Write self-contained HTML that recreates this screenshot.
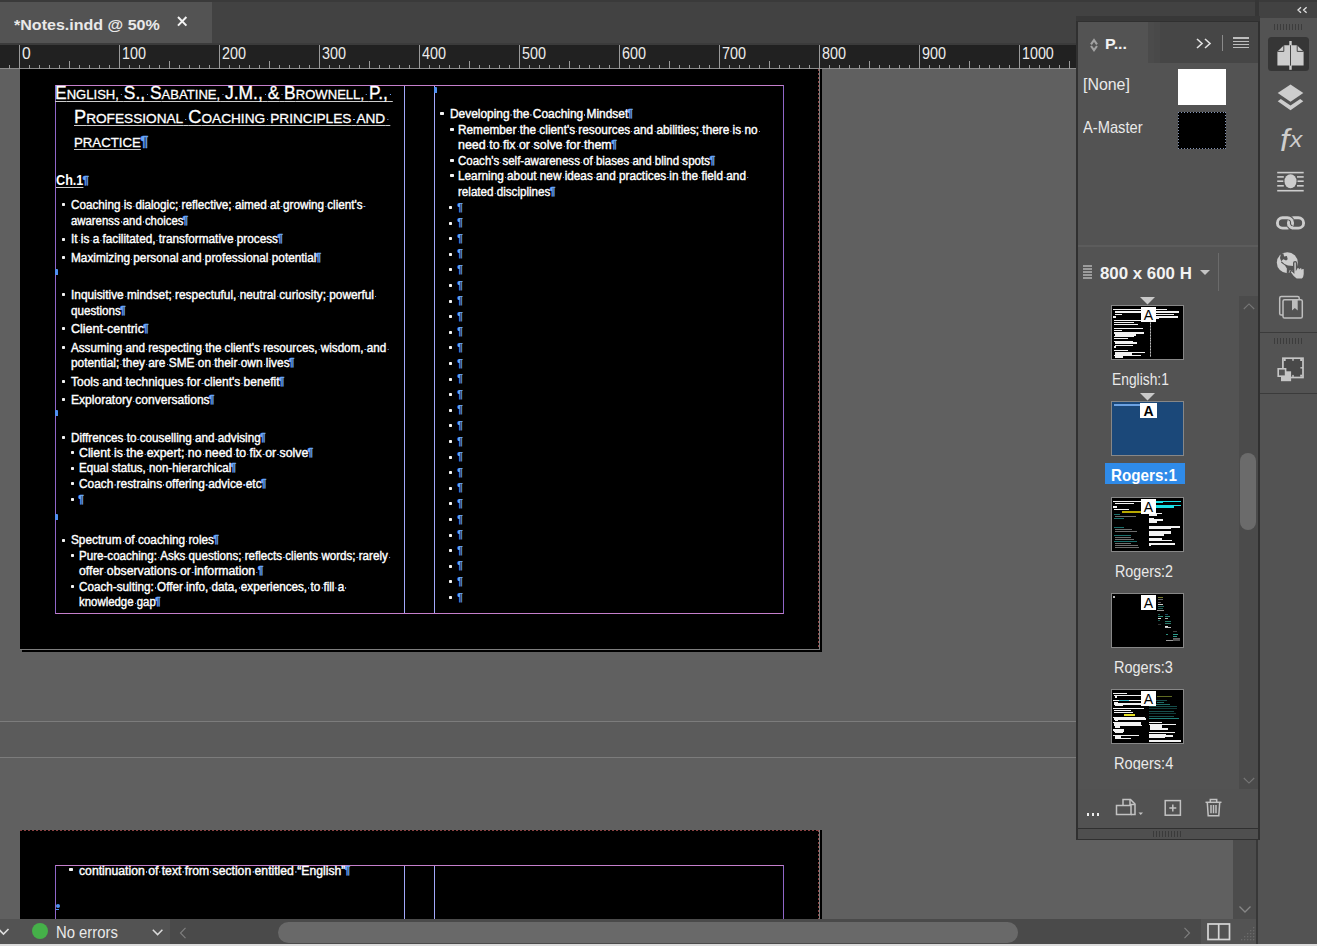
<!DOCTYPE html>
<html lang="en"><head><meta charset="utf-8"><title>Notes.indd</title>
<style>
html,body{margin:0;padding:0}
html{width:1317px;height:946px;overflow:hidden}
body{width:1317px;height:946px;position:relative;overflow:hidden;background:#606060;font-family:"Liberation Sans",sans-serif;color:#e6e6e6}
.ab{position:absolute}
.ln{position:absolute;white-space:pre;transform-origin:0 0;color:#fff}
.bt{-webkit-text-stroke:.4px #fff}
.tt{-webkit-text-stroke:.3px #fff}
.ui{color:#e9e9e9}
.p{color:#66a4f7;font-weight:bold;-webkit-text-stroke:.35px #6aa7f8;font-size:10px;position:relative;top:-1px;display:inline-block;margin-left:-.8px;text-decoration:none}
.pw{margin-left:0;-webkit-text-stroke:.2px #6aa7f8}
.d{font-style:normal;position:relative}
.d::after{content:"";position:absolute;left:50%;margin-left:-.5px;top:56%;width:1.2px;height:1.2px;background:#74acff}
.u>span{text-decoration:underline;text-decoration-thickness:1.3px;text-underline-offset:1.6px;text-decoration-color:#cdcdcd}
.sc{font-size:13.5px}
.bl{position:absolute;width:3.3px;height:3px;background:#f4f4f4;border-radius:.7px}
.mk{position:absolute;width:3px;height:6px;background:#4f90f2;border-radius:1px 1px 0 1px}
svg{position:absolute;overflow:visible}
</style></head>
<body>
<!-- canvas / pasteboard -->
<div class="ab" style="left:20px;top:48px;width:799px;height:601px;background:#000;border-right:1px solid #7e7e7e;border-bottom:1px solid #7e7e7e;box-shadow:2px 2px 0 0 #000"></div>
<div class="ab" style="left:818px;top:69px;width:1px;height:580px;background:repeating-linear-gradient(to bottom,#8e4444 0,#8e4444 2px,transparent 2px,transparent 4px)"></div>
<div class="ab" style="left:55px;top:85px;width:729px;height:529px;box-sizing:border-box;border:1px solid #c57fcb;border-left-color:#8f66c8;border-right-color:#8f66c8"></div>
<div class="ab" style="left:404px;top:86px;width:1px;height:527px;background:#a2a8fb"></div>
<div class="ab" style="left:434px;top:86px;width:1px;height:527px;background:#a2a8fb"></div>
<div class="ln tt u" style="left:54.80px;top:83.90px;font-size:18px;line-height:18px;transform:scaleX(0.9681);"><span>E<span class="sc">NGLISH,</span><i class="d"> </i>S.,<i class="d"> </i>S<span class="sc">ABATINE,</span><i class="d"> </i>J.M.,<i class="d"> </i>&amp;<i class="d"> </i>B<span class="sc">ROWNELL,</span><i class="d"> </i>P.,<i class="d"> </i></span></div>
<div class="ln tt u" style="left:74.20px;top:108.40px;font-size:18px;line-height:18px;transform:scaleX(1.0108);"><span>P<span class="sc">ROFESSIONAL</span><i class="d"> </i>C<span class="sc">OACHING</span><i class="d"> </i><span class="sc">PRINCIPLES</span><i class="d"> </i><span class="sc">AND</span><i class="d"> </i></span></div>
<div class="ln tt u" style="left:74.20px;top:132.30px;font-size:18px;line-height:18px;transform:scaleX(0.9785);"><span><span class="sc">PRACTICE</span></span></div>
<div class="ln" style="left:141.00px;top:132.30px;font-size:18px;line-height:18px"><b class="p" style="font-size:14.5px">¶</b></div>
<div class="ln u" style="left:55.90px;top:173.40px;font-size:14px;line-height:14px;font-weight:bold;transform:scaleX(0.9030);"><span>Ch.1</span></div>
<div class="ln" style="left:83.30px;top:173.40px;font-size:14px;line-height:14px"><b class="p" style="font-size:11.5px">¶</b></div>
<div class="bl" style="left:61.8px;top:202.9px"></div>
<div class="ln bt" style="left:71.00px;top:198.75px;font-size:12px;line-height:12px;transform:scaleX(0.9747);"><span>Coaching<i class="d"> </i>is<i class="d"> </i>dialogic;<i class="d"> </i>reflective;<i class="d"> </i>aimed<i class="d"> </i>at<i class="d"> </i>growing<i class="d"> </i>client's<i class="d"> </i></span></div>
<div class="ln bt" style="left:71.00px;top:214.60px;font-size:12px;line-height:12px;transform:scaleX(0.9464);"><span>awarenss<i class="d"> </i>and<i class="d"> </i>choices</span></div>
<div class="ln" style="left:183.40px;top:214.60px;font-size:12px;line-height:12px"><b class="p">¶</b></div>
<div class="bl" style="left:61.8px;top:237.6px"></div>
<div class="ln bt" style="left:71.00px;top:233.40px;font-size:12px;line-height:12px;transform:scaleX(0.9818);"><span>It<i class="d"> </i>is<i class="d"> </i>a<i class="d"> </i>facilitated,<i class="d"> </i>transformative<i class="d"> </i>process</span></div>
<div class="ln" style="left:278.00px;top:233.40px;font-size:12px;line-height:12px"><b class="p">¶</b></div>
<div class="bl" style="left:61.8px;top:256.3px"></div>
<div class="ln bt" style="left:71.00px;top:252.10px;font-size:12px;line-height:12px;transform:scaleX(0.9834);"><span>Maximizing<i class="d"> </i>personal<i class="d"> </i>and<i class="d"> </i>professional<i class="d"> </i>potential</span></div>
<div class="ln" style="left:316.40px;top:252.10px;font-size:12px;line-height:12px"><b class="p">¶</b></div>
<div class="bl" style="left:61.8px;top:293.2px"></div>
<div class="ln bt" style="left:71.00px;top:289.00px;font-size:12px;line-height:12px;transform:scaleX(0.9873);"><span>Inquisitive<i class="d"> </i>mindset;<i class="d"> </i>respectuful,<i class="d"> </i>neutral<i class="d"> </i>curiosity;<i class="d"> </i>powerful<i class="d"> </i></span></div>
<div class="ln bt" style="left:71.00px;top:305.00px;font-size:12px;line-height:12px;transform:scaleX(0.9693);"><span>questions</span></div>
<div class="ln" style="left:120.80px;top:305.00px;font-size:12px;line-height:12px"><b class="p">¶</b></div>
<div class="bl" style="left:61.8px;top:327.2px"></div>
<div class="ln bt" style="left:71.00px;top:323.00px;font-size:12px;line-height:12px;transform:scaleX(1.0410);"><span>Client-centric</span></div>
<div class="ln" style="left:143.90px;top:323.00px;font-size:12px;line-height:12px"><b class="p">¶</b></div>
<div class="bl" style="left:61.8px;top:345.9px"></div>
<div class="ln bt" style="left:71.00px;top:341.70px;font-size:12px;line-height:12px;transform:scaleX(0.9713);"><span>Assuming<i class="d"> </i>and<i class="d"> </i>respecting<i class="d"> </i>the<i class="d"> </i>client's<i class="d"> </i>resources,<i class="d"> </i>wisdom,<i class="d"> </i>and<i class="d"> </i></span></div>
<div class="ln bt" style="left:71.00px;top:357.00px;font-size:12px;line-height:12px;transform:scaleX(0.9896);"><span>potential;<i class="d"> </i>they<i class="d"> </i>are<i class="d"> </i>SME<i class="d"> </i>on<i class="d"> </i>their<i class="d"> </i>own<i class="d"> </i>lives</span></div>
<div class="ln" style="left:289.60px;top:357.00px;font-size:12px;line-height:12px"><b class="p">¶</b></div>
<div class="bl" style="left:61.8px;top:380.0px"></div>
<div class="ln bt" style="left:71.00px;top:375.80px;font-size:12px;line-height:12px;transform:scaleX(0.9968);"><span>Tools<i class="d"> </i>and<i class="d"> </i>techniques<i class="d"> </i>for<i class="d"> </i>client's<i class="d"> </i>benefit</span></div>
<div class="ln" style="left:279.50px;top:375.80px;font-size:12px;line-height:12px"><b class="p">¶</b></div>
<div class="bl" style="left:61.8px;top:397.9px"></div>
<div class="ln bt" style="left:71.00px;top:393.70px;font-size:12px;line-height:12px;transform:scaleX(1.0037);"><span>Exploratory<i class="d"> </i>conversations</span></div>
<div class="ln" style="left:209.60px;top:393.70px;font-size:12px;line-height:12px"><b class="p">¶</b></div>
<div class="bl" style="left:61.8px;top:436.0px"></div>
<div class="ln bt" style="left:71.00px;top:431.80px;font-size:12px;line-height:12px;transform:scaleX(0.9746);"><span>Diffrences<i class="d"> </i>to<i class="d"> </i>couselling<i class="d"> </i>and<i class="d"> </i>advising</span></div>
<div class="ln" style="left:260.70px;top:431.80px;font-size:12px;line-height:12px"><b class="p">¶</b></div>
<div class="bl" style="left:71.0px;top:450.9px"></div>
<div class="ln bt" style="left:79.00px;top:446.70px;font-size:12px;line-height:12px;transform:scaleX(1.0255);"><span>Client<i class="d"> </i>is<i class="d"> </i>the<i class="d"> </i>expert;<i class="d"> </i>no<i class="d"> </i>need<i class="d"> </i>to<i class="d"> </i>fix<i class="d"> </i>or<i class="d"> </i>solve</span></div>
<div class="ln" style="left:308.30px;top:446.70px;font-size:12px;line-height:12px"><b class="p">¶</b></div>
<div class="bl" style="left:71.0px;top:466.5px"></div>
<div class="ln bt" style="left:79.00px;top:462.30px;font-size:12px;line-height:12px;transform:scaleX(0.9631);"><span>Equal<i class="d"> </i>status,<i class="d"> </i>non-hierarchical</span></div>
<div class="ln" style="left:231.30px;top:462.30px;font-size:12px;line-height:12px"><b class="p">¶</b></div>
<div class="bl" style="left:71.0px;top:481.8px"></div>
<div class="ln bt" style="left:79.00px;top:477.60px;font-size:12px;line-height:12px;transform:scaleX(0.9892);"><span>Coach<i class="d"> </i>restrains<i class="d"> </i>offering<i class="d"> </i>advice<i class="d"> </i>etc</span></div>
<div class="ln" style="left:261.60px;top:477.60px;font-size:12px;line-height:12px"><b class="p">¶</b></div>
<div class="bl" style="left:71.0px;top:497.7px"></div>
<div class="ln" style="left:79.0px;top:493.5px;font-size:12px;line-height:12px"><b class="p">¶</b></div>
<div class="bl" style="left:61.8px;top:538.6px"></div>
<div class="ln bt" style="left:71.00px;top:534.40px;font-size:12px;line-height:12px;transform:scaleX(0.9830);"><span>Spectrum<i class="d"> </i>of<i class="d"> </i>coaching<i class="d"> </i>roles</span></div>
<div class="ln" style="left:214.00px;top:534.40px;font-size:12px;line-height:12px"><b class="p">¶</b></div>
<div class="bl" style="left:71.0px;top:553.9px"></div>
<div class="ln bt" style="left:79.00px;top:549.70px;font-size:12px;line-height:12px;transform:scaleX(0.9662);"><span>Pure-coaching:<i class="d"> </i>Asks<i class="d"> </i>questions;<i class="d"> </i>reflects<i class="d"> </i>clients<i class="d"> </i>words;<i class="d"> </i>rarely<i class="d"> </i></span></div>
<div class="ln bt" style="left:79.00px;top:565.20px;font-size:12px;line-height:12px;transform:scaleX(1.0247);"><span>offer<i class="d"> </i>observations<i class="d"> </i>or<i class="d"> </i>information<i class="d"> </i></span></div>
<div class="ln" style="left:258.60px;top:565.20px;font-size:12px;line-height:12px"><b class="p">¶</b></div>
<div class="bl" style="left:71.0px;top:584.7px"></div>
<div class="ln bt" style="left:79.00px;top:580.50px;font-size:12px;line-height:12px;transform:scaleX(0.9749);"><span>Coach-sulting:<i class="d"> </i>Offer<i class="d"> </i>info,<i class="d"> </i>data,<i class="d"> </i>experiences,<i class="d"> </i>to<i class="d"> </i>fill<i class="d"> </i>a<i class="d"> </i></span></div>
<div class="ln bt" style="left:79.00px;top:596.40px;font-size:12px;line-height:12px;transform:scaleX(0.9511);"><span>knowledge<i class="d"> </i>gap</span></div>
<div class="ln" style="left:155.80px;top:596.40px;font-size:12px;line-height:12px"><b class="p">¶</b></div>
<div class="mk" style="left:55.0px;top:268.6px"></div>
<div class="mk" style="left:55.0px;top:410.2px"></div>
<div class="mk" style="left:55.0px;top:513.5px"></div>
<div class="mk" style="left:434.0px;top:86.5px"></div>
<div class="bl" style="left:440.4px;top:111.8px"></div>
<div class="ln bt" style="left:449.80px;top:107.60px;font-size:12px;line-height:12px;transform:scaleX(0.9928);"><span>Developing<i class="d"> </i>the<i class="d"> </i>Coaching<i class="d"> </i>Mindset</span></div>
<div class="ln" style="left:628.00px;top:107.60px;font-size:12px;line-height:12px"><b class="p">¶</b></div>
<div class="bl" style="left:450.3px;top:128.2px"></div>
<div class="ln bt" style="left:458.30px;top:124.00px;font-size:12px;line-height:12px;transform:scaleX(0.9834);"><span>Remember<i class="d"> </i>the<i class="d"> </i>client's<i class="d"> </i>resources<i class="d"> </i>and<i class="d"> </i>abilities;<i class="d"> </i>there<i class="d"> </i>is<i class="d"> </i>no<i class="d"> </i></span></div>
<div class="ln bt" style="left:458.30px;top:139.30px;font-size:12px;line-height:12px;transform:scaleX(1.0373);"><span>need<i class="d"> </i>to<i class="d"> </i>fix<i class="d"> </i>or<i class="d"> </i>solve<i class="d"> </i>for<i class="d"> </i>them</span></div>
<div class="ln" style="left:612.00px;top:139.30px;font-size:12px;line-height:12px"><b class="p">¶</b></div>
<div class="bl" style="left:450.3px;top:159.4px"></div>
<div class="ln bt" style="left:458.30px;top:155.20px;font-size:12px;line-height:12px;transform:scaleX(0.9595);"><span>Coach's<i class="d"> </i>self-awareness<i class="d"> </i>of<i class="d"> </i>biases<i class="d"> </i>and<i class="d"> </i>blind<i class="d"> </i>spots</span></div>
<div class="ln" style="left:710.20px;top:155.20px;font-size:12px;line-height:12px"><b class="p">¶</b></div>
<div class="bl" style="left:450.3px;top:174.3px"></div>
<div class="ln bt" style="left:458.30px;top:170.10px;font-size:12px;line-height:12px;transform:scaleX(0.9804);"><span>Learning<i class="d"> </i>about<i class="d"> </i>new<i class="d"> </i>ideas<i class="d"> </i>and<i class="d"> </i>practices<i class="d"> </i>in<i class="d"> </i>the<i class="d"> </i>field<i class="d"> </i>and<i class="d"> </i></span></div>
<div class="ln bt" style="left:458.30px;top:186.00px;font-size:12px;line-height:12px;transform:scaleX(0.9674);"><span>related<i class="d"> </i>disciplines</span></div>
<div class="ln" style="left:550.60px;top:186.00px;font-size:12px;line-height:12px"><b class="p">¶</b></div>
<div class="bl" style="left:449.0px;top:205.9px"></div>
<div class="ln" style="left:457.3px;top:201.60px;font-size:12px;line-height:12px"><b class="p pw">¶</b></div>
<div class="bl" style="left:449.0px;top:221.5px"></div>
<div class="ln" style="left:457.3px;top:217.20px;font-size:12px;line-height:12px"><b class="p pw">¶</b></div>
<div class="bl" style="left:449.0px;top:237.1px"></div>
<div class="ln" style="left:457.3px;top:232.80px;font-size:12px;line-height:12px"><b class="p pw">¶</b></div>
<div class="bl" style="left:449.0px;top:252.7px"></div>
<div class="ln" style="left:457.3px;top:248.40px;font-size:12px;line-height:12px"><b class="p pw">¶</b></div>
<div class="bl" style="left:449.0px;top:268.3px"></div>
<div class="ln" style="left:457.3px;top:264.00px;font-size:12px;line-height:12px"><b class="p pw">¶</b></div>
<div class="bl" style="left:449.0px;top:283.9px"></div>
<div class="ln" style="left:457.3px;top:279.60px;font-size:12px;line-height:12px"><b class="p pw">¶</b></div>
<div class="bl" style="left:449.0px;top:299.5px"></div>
<div class="ln" style="left:457.3px;top:295.20px;font-size:12px;line-height:12px"><b class="p pw">¶</b></div>
<div class="bl" style="left:449.0px;top:315.1px"></div>
<div class="ln" style="left:457.3px;top:310.80px;font-size:12px;line-height:12px"><b class="p pw">¶</b></div>
<div class="bl" style="left:449.0px;top:330.7px"></div>
<div class="ln" style="left:457.3px;top:326.40px;font-size:12px;line-height:12px"><b class="p pw">¶</b></div>
<div class="bl" style="left:449.0px;top:346.3px"></div>
<div class="ln" style="left:457.3px;top:342.00px;font-size:12px;line-height:12px"><b class="p pw">¶</b></div>
<div class="bl" style="left:449.0px;top:361.9px"></div>
<div class="ln" style="left:457.3px;top:357.60px;font-size:12px;line-height:12px"><b class="p pw">¶</b></div>
<div class="bl" style="left:449.0px;top:377.5px"></div>
<div class="ln" style="left:457.3px;top:373.20px;font-size:12px;line-height:12px"><b class="p pw">¶</b></div>
<div class="bl" style="left:449.0px;top:393.1px"></div>
<div class="ln" style="left:457.3px;top:388.80px;font-size:12px;line-height:12px"><b class="p pw">¶</b></div>
<div class="bl" style="left:449.0px;top:408.7px"></div>
<div class="ln" style="left:457.3px;top:404.40px;font-size:12px;line-height:12px"><b class="p pw">¶</b></div>
<div class="bl" style="left:449.0px;top:424.3px"></div>
<div class="ln" style="left:457.3px;top:420.00px;font-size:12px;line-height:12px"><b class="p pw">¶</b></div>
<div class="bl" style="left:449.0px;top:439.9px"></div>
<div class="ln" style="left:457.3px;top:435.60px;font-size:12px;line-height:12px"><b class="p pw">¶</b></div>
<div class="bl" style="left:449.0px;top:455.5px"></div>
<div class="ln" style="left:457.3px;top:451.20px;font-size:12px;line-height:12px"><b class="p pw">¶</b></div>
<div class="bl" style="left:449.0px;top:471.1px"></div>
<div class="ln" style="left:457.3px;top:466.80px;font-size:12px;line-height:12px"><b class="p pw">¶</b></div>
<div class="bl" style="left:449.0px;top:486.7px"></div>
<div class="ln" style="left:457.3px;top:482.40px;font-size:12px;line-height:12px"><b class="p pw">¶</b></div>
<div class="bl" style="left:449.0px;top:502.3px"></div>
<div class="ln" style="left:457.3px;top:498.00px;font-size:12px;line-height:12px"><b class="p pw">¶</b></div>
<div class="bl" style="left:449.0px;top:517.9px"></div>
<div class="ln" style="left:457.3px;top:513.60px;font-size:12px;line-height:12px"><b class="p pw">¶</b></div>
<div class="bl" style="left:449.0px;top:533.5px"></div>
<div class="ln" style="left:457.3px;top:529.20px;font-size:12px;line-height:12px"><b class="p pw">¶</b></div>
<div class="bl" style="left:449.0px;top:549.1px"></div>
<div class="ln" style="left:457.3px;top:544.80px;font-size:12px;line-height:12px"><b class="p pw">¶</b></div>
<div class="bl" style="left:449.0px;top:564.7px"></div>
<div class="ln" style="left:457.3px;top:560.40px;font-size:12px;line-height:12px"><b class="p pw">¶</b></div>
<div class="bl" style="left:449.0px;top:580.3px"></div>
<div class="ln" style="left:457.3px;top:576.00px;font-size:12px;line-height:12px"><b class="p pw">¶</b></div>
<div class="bl" style="left:449.0px;top:595.9px"></div>
<div class="ln" style="left:457.3px;top:591.60px;font-size:12px;line-height:12px"><b class="p pw">¶</b></div>
<div class="ab" style="left:0;top:721px;width:1317px;height:37px;background:#5b5b5b;border-top:1px solid #7c7c7c;border-bottom:1px solid #7c7c7c;box-sizing:border-box"></div>
<div class="ab" style="left:20px;top:830px;width:799px;height:120px;background:#000;border-right:1px solid #7e7e7e;box-shadow:2px 0 0 0 #000"></div>
<div class="ab" style="left:20px;top:830px;width:800px;height:1px;background:repeating-linear-gradient(to right,#8a4040 0,#8a4040 2px,transparent 2px,transparent 4px)"></div>
<div class="ab" style="left:818px;top:830px;width:1px;height:100px;background:repeating-linear-gradient(to bottom,#8e4444 0,#8e4444 2px,transparent 2px,transparent 4px)"></div>
<div class="ab" style="left:55px;top:865px;width:729px;height:100px;box-sizing:border-box;border:1px solid #c57fcb;border-left-color:#8f66c8;border-right-color:#8f66c8"></div>
<div class="ab" style="left:404px;top:866px;width:1px;height:80px;background:#a2a8fb"></div>
<div class="ab" style="left:434px;top:866px;width:1px;height:80px;background:#a2a8fb"></div>
<div class="bl" style="left:69.3px;top:868.3px"></div>
<div class="ln bt" style="left:79.00px;top:864.50px;font-size:12px;line-height:12px;transform:scaleX(1.0159);"><span>continuation<i class="d"> </i>of<i class="d"> </i>text<i class="d"> </i>from<i class="d"> </i>section<i class="d"> </i>entitled<i class="d"> </i>“English”</span></div>
<div class="ln" style="left:345.40px;top:864.50px;font-size:12px;line-height:12px"><b class="p">¶</b></div>
<div class="ab" style="left:55.5px;top:903.5px;width:4px;height:4px;border-radius:2px;background:#4f90f2"></div>
<div class="ab" style="left:56px;top:908.5px;width:3px;height:1px;background:#4f90f2"></div>
<!-- document tab bar -->
<div class="ab" style="left:0;top:0;width:1317px;height:44px;background:#424242"></div>
<div class="ab" style="left:0;top:0;width:1317px;height:2px;background:#3a3a3a"></div>
<div class="ab" style="left:0;top:2px;width:212px;height:41.5px;background:#535353"></div>
<div class="ln ui" style="left:13.70px;top:17.20px;font-size:15px;line-height:15px;font-weight:bold;transform:scaleX(1.0695);"><span>*Notes.indd @ 50%</span></div>
<svg style="left:177.3px;top:16.2px" width="11" height="11" viewBox="0 0 11 11"><path d="M1 1 L9.4 9.6 M9.4 1 L1 9.6" stroke="#f4f4f4" stroke-width="2" fill="none"/></svg>
<!-- ruler -->
<div class="ab" style="left:0;top:43px;width:1078px;height:2px;background:#3b3b3b"></div>
<div class="ab" style="left:0;top:45px;width:1078px;height:24px;background:#212121"></div>
<svg style="left:0;top:45px" width="1078" height="24" viewBox="0 0 1078 24" shape-rendering="crispEdges"><rect x="0" y="23" width="1078" height="1" fill="#8c8c8c"/><rect x="9" y="20" width="1" height="4" fill="#9a9a9a"/><rect x="19" y="0" width="1" height="24" fill="#9a9a9a"/><rect x="29" y="20" width="1" height="4" fill="#9a9a9a"/><rect x="39" y="20" width="1" height="4" fill="#9a9a9a"/><rect x="49" y="20" width="1" height="4" fill="#9a9a9a"/><rect x="59" y="20" width="1" height="4" fill="#9a9a9a"/><rect x="69" y="16" width="1" height="8" fill="#9a9a9a"/><rect x="79" y="20" width="1" height="4" fill="#9a9a9a"/><rect x="89" y="20" width="1" height="4" fill="#9a9a9a"/><rect x="99" y="20" width="1" height="4" fill="#9a9a9a"/><rect x="109" y="20" width="1" height="4" fill="#9a9a9a"/><rect x="119" y="0" width="1" height="24" fill="#9a9a9a"/><rect x="129" y="20" width="1" height="4" fill="#9a9a9a"/><rect x="139" y="20" width="1" height="4" fill="#9a9a9a"/><rect x="149" y="20" width="1" height="4" fill="#9a9a9a"/><rect x="159" y="20" width="1" height="4" fill="#9a9a9a"/><rect x="169" y="16" width="1" height="8" fill="#9a9a9a"/><rect x="179" y="20" width="1" height="4" fill="#9a9a9a"/><rect x="189" y="20" width="1" height="4" fill="#9a9a9a"/><rect x="199" y="20" width="1" height="4" fill="#9a9a9a"/><rect x="209" y="20" width="1" height="4" fill="#9a9a9a"/><rect x="219" y="0" width="1" height="24" fill="#9a9a9a"/><rect x="229" y="20" width="1" height="4" fill="#9a9a9a"/><rect x="239" y="20" width="1" height="4" fill="#9a9a9a"/><rect x="249" y="20" width="1" height="4" fill="#9a9a9a"/><rect x="259" y="20" width="1" height="4" fill="#9a9a9a"/><rect x="269" y="16" width="1" height="8" fill="#9a9a9a"/><rect x="279" y="20" width="1" height="4" fill="#9a9a9a"/><rect x="289" y="20" width="1" height="4" fill="#9a9a9a"/><rect x="299" y="20" width="1" height="4" fill="#9a9a9a"/><rect x="309" y="20" width="1" height="4" fill="#9a9a9a"/><rect x="319" y="0" width="1" height="24" fill="#9a9a9a"/><rect x="329" y="20" width="1" height="4" fill="#9a9a9a"/><rect x="339" y="20" width="1" height="4" fill="#9a9a9a"/><rect x="349" y="20" width="1" height="4" fill="#9a9a9a"/><rect x="359" y="20" width="1" height="4" fill="#9a9a9a"/><rect x="369" y="16" width="1" height="8" fill="#9a9a9a"/><rect x="379" y="20" width="1" height="4" fill="#9a9a9a"/><rect x="389" y="20" width="1" height="4" fill="#9a9a9a"/><rect x="399" y="20" width="1" height="4" fill="#9a9a9a"/><rect x="409" y="20" width="1" height="4" fill="#9a9a9a"/><rect x="419" y="0" width="1" height="24" fill="#9a9a9a"/><rect x="429" y="20" width="1" height="4" fill="#9a9a9a"/><rect x="439" y="20" width="1" height="4" fill="#9a9a9a"/><rect x="449" y="20" width="1" height="4" fill="#9a9a9a"/><rect x="459" y="20" width="1" height="4" fill="#9a9a9a"/><rect x="469" y="16" width="1" height="8" fill="#9a9a9a"/><rect x="479" y="20" width="1" height="4" fill="#9a9a9a"/><rect x="489" y="20" width="1" height="4" fill="#9a9a9a"/><rect x="499" y="20" width="1" height="4" fill="#9a9a9a"/><rect x="509" y="20" width="1" height="4" fill="#9a9a9a"/><rect x="519" y="0" width="1" height="24" fill="#9a9a9a"/><rect x="529" y="20" width="1" height="4" fill="#9a9a9a"/><rect x="539" y="20" width="1" height="4" fill="#9a9a9a"/><rect x="549" y="20" width="1" height="4" fill="#9a9a9a"/><rect x="559" y="20" width="1" height="4" fill="#9a9a9a"/><rect x="569" y="16" width="1" height="8" fill="#9a9a9a"/><rect x="579" y="20" width="1" height="4" fill="#9a9a9a"/><rect x="589" y="20" width="1" height="4" fill="#9a9a9a"/><rect x="599" y="20" width="1" height="4" fill="#9a9a9a"/><rect x="609" y="20" width="1" height="4" fill="#9a9a9a"/><rect x="619" y="0" width="1" height="24" fill="#9a9a9a"/><rect x="629" y="20" width="1" height="4" fill="#9a9a9a"/><rect x="639" y="20" width="1" height="4" fill="#9a9a9a"/><rect x="649" y="20" width="1" height="4" fill="#9a9a9a"/><rect x="659" y="20" width="1" height="4" fill="#9a9a9a"/><rect x="669" y="16" width="1" height="8" fill="#9a9a9a"/><rect x="679" y="20" width="1" height="4" fill="#9a9a9a"/><rect x="689" y="20" width="1" height="4" fill="#9a9a9a"/><rect x="699" y="20" width="1" height="4" fill="#9a9a9a"/><rect x="709" y="20" width="1" height="4" fill="#9a9a9a"/><rect x="719" y="0" width="1" height="24" fill="#9a9a9a"/><rect x="729" y="20" width="1" height="4" fill="#9a9a9a"/><rect x="739" y="20" width="1" height="4" fill="#9a9a9a"/><rect x="749" y="20" width="1" height="4" fill="#9a9a9a"/><rect x="759" y="20" width="1" height="4" fill="#9a9a9a"/><rect x="769" y="16" width="1" height="8" fill="#9a9a9a"/><rect x="779" y="20" width="1" height="4" fill="#9a9a9a"/><rect x="789" y="20" width="1" height="4" fill="#9a9a9a"/><rect x="799" y="20" width="1" height="4" fill="#9a9a9a"/><rect x="809" y="20" width="1" height="4" fill="#9a9a9a"/><rect x="819" y="0" width="1" height="24" fill="#9a9a9a"/><rect x="829" y="20" width="1" height="4" fill="#9a9a9a"/><rect x="839" y="20" width="1" height="4" fill="#9a9a9a"/><rect x="849" y="20" width="1" height="4" fill="#9a9a9a"/><rect x="859" y="20" width="1" height="4" fill="#9a9a9a"/><rect x="869" y="16" width="1" height="8" fill="#9a9a9a"/><rect x="879" y="20" width="1" height="4" fill="#9a9a9a"/><rect x="889" y="20" width="1" height="4" fill="#9a9a9a"/><rect x="899" y="20" width="1" height="4" fill="#9a9a9a"/><rect x="909" y="20" width="1" height="4" fill="#9a9a9a"/><rect x="919" y="0" width="1" height="24" fill="#9a9a9a"/><rect x="929" y="20" width="1" height="4" fill="#9a9a9a"/><rect x="939" y="20" width="1" height="4" fill="#9a9a9a"/><rect x="949" y="20" width="1" height="4" fill="#9a9a9a"/><rect x="959" y="20" width="1" height="4" fill="#9a9a9a"/><rect x="969" y="16" width="1" height="8" fill="#9a9a9a"/><rect x="979" y="20" width="1" height="4" fill="#9a9a9a"/><rect x="989" y="20" width="1" height="4" fill="#9a9a9a"/><rect x="999" y="20" width="1" height="4" fill="#9a9a9a"/><rect x="1009" y="20" width="1" height="4" fill="#9a9a9a"/><rect x="1019" y="0" width="1" height="24" fill="#9a9a9a"/><rect x="1029" y="20" width="1" height="4" fill="#9a9a9a"/><rect x="1039" y="20" width="1" height="4" fill="#9a9a9a"/><rect x="1049" y="20" width="1" height="4" fill="#9a9a9a"/><rect x="1059" y="20" width="1" height="4" fill="#9a9a9a"/><rect x="1069" y="16" width="1" height="8" fill="#9a9a9a"/></svg>
<div class="ln ui" style="left:21.80px;top:44.90px;font-size:17px;line-height:17px;color:#ececec;transform:scaleX(0.9188);"><span>0</span></div>
<div class="ln ui" style="left:121.80px;top:44.90px;font-size:17px;line-height:17px;color:#ececec;transform:scaleX(0.8458);"><span>100</span></div>
<div class="ln ui" style="left:221.80px;top:44.90px;font-size:17px;line-height:17px;color:#ececec;transform:scaleX(0.8458);"><span>200</span></div>
<div class="ln ui" style="left:321.80px;top:44.90px;font-size:17px;line-height:17px;color:#ececec;transform:scaleX(0.8458);"><span>300</span></div>
<div class="ln ui" style="left:421.80px;top:44.90px;font-size:17px;line-height:17px;color:#ececec;transform:scaleX(0.8458);"><span>400</span></div>
<div class="ln ui" style="left:521.80px;top:44.90px;font-size:17px;line-height:17px;color:#ececec;transform:scaleX(0.8458);"><span>500</span></div>
<div class="ln ui" style="left:621.80px;top:44.90px;font-size:17px;line-height:17px;color:#ececec;transform:scaleX(0.8458);"><span>600</span></div>
<div class="ln ui" style="left:721.80px;top:44.90px;font-size:17px;line-height:17px;color:#ececec;transform:scaleX(0.8458);"><span>700</span></div>
<div class="ln ui" style="left:821.80px;top:44.90px;font-size:17px;line-height:17px;color:#ececec;transform:scaleX(0.8458);"><span>800</span></div>
<div class="ln ui" style="left:921.80px;top:44.90px;font-size:17px;line-height:17px;color:#ececec;transform:scaleX(0.8458);"><span>900</span></div>
<div class="ln ui" style="left:1021.80px;top:44.90px;font-size:17px;line-height:17px;color:#ececec;transform:scaleX(0.8406);"><span>1000</span></div>
<!-- status bar -->
<div class="ab" style="left:1233px;top:69px;width:23px;height:851px;background:#4c4c4c"></div>
<svg style="left:1238px;top:904.5px" width="14" height="9" viewBox="0 0 14 9"><path d="M1.5 1.5 L7 7 L12.5 1.5" stroke="#868686" stroke-width="1.3" fill="none"/></svg>
<div class="ab" style="left:0;top:919px;width:1317px;height:25px;background:#535353"></div>
<div class="ab" style="left:170px;top:919px;width:1031px;height:25px;background:#4a4a4a"></div>
<div class="ab" style="left:0;top:943.6px;width:1317px;height:3px;background:#dcdcdc"></div>
<svg style="left:0;top:928px" width="9" height="8" viewBox="0 0 9 8"><path d="M-2 0.5 L3.5 6 L8.5 1" stroke="#dcdcdc" stroke-width="1.6" fill="none"/></svg>
<div class="ab" style="left:31.5px;top:923px;width:16px;height:16px;border-radius:8px;background:#45b049"></div>
<div class="ln ui" style="left:56.40px;top:925.00px;font-size:16px;line-height:16px;transform:scaleX(0.9282);"><span>No errors</span></div>
<svg style="left:151.5px;top:929px" width="12" height="7" viewBox="0 0 12 7"><path d="M0.8 0.8 L5.6 5.6 L10.4 0.8" stroke="#dadada" stroke-width="1.5" fill="none"/></svg>
<svg style="left:179px;top:927px" width="8" height="12" viewBox="0 0 8 12"><path d="M6.5 0.8 L1.5 6 L6.5 11.2" stroke="#7e7e7e" stroke-width="1.2" fill="none"/></svg>
<div class="ab" style="left:278px;top:921.5px;width:740px;height:21px;border-radius:10.5px;background:#696969"></div>
<svg style="left:1183px;top:927px" width="8" height="12" viewBox="0 0 8 12"><path d="M1.5 0.8 L6.5 6 L1.5 11.2" stroke="#7e7e7e" stroke-width="1.2" fill="none"/></svg>
<svg style="left:1207px;top:923px" width="24" height="18" viewBox="0 0 24 18"><rect x="1" y="1" width="21.5" height="15.5" fill="none" stroke="#d6d6d6" stroke-width="1.7"/><path d="M11.7 1 V16.5" stroke="#d6d6d6" stroke-width="1.7"/></svg>
<svg style="left:1240px;top:926px" width="16" height="16" viewBox="0 0 16 16"><rect x="13" y="1" width="1.3" height="1.3" fill="#6a6a6a"/><rect x="10" y="4" width="1.3" height="1.3" fill="#6a6a6a"/><rect x="13" y="4" width="1.3" height="1.3" fill="#6a6a6a"/><rect x="7" y="7" width="1.3" height="1.3" fill="#6a6a6a"/><rect x="10" y="7" width="1.3" height="1.3" fill="#6a6a6a"/><rect x="13" y="7" width="1.3" height="1.3" fill="#6a6a6a"/><rect x="4" y="10" width="1.3" height="1.3" fill="#6a6a6a"/><rect x="7" y="10" width="1.3" height="1.3" fill="#6a6a6a"/><rect x="10" y="10" width="1.3" height="1.3" fill="#6a6a6a"/><rect x="13" y="10" width="1.3" height="1.3" fill="#6a6a6a"/><rect x="1" y="13" width="1.3" height="1.3" fill="#6a6a6a"/><rect x="4" y="13" width="1.3" height="1.3" fill="#6a6a6a"/><rect x="7" y="13" width="1.3" height="1.3" fill="#6a6a6a"/><rect x="10" y="13" width="1.3" height="1.3" fill="#6a6a6a"/><rect x="13" y="13" width="1.3" height="1.3" fill="#6a6a6a"/></svg>
<!-- right dock -->
<div class="ab" style="left:1257px;top:0;width:60px;height:944px;background:#535353"></div>
<div class="ab" style="left:1256px;top:0;width:1.6px;height:944px;background:#383838"></div>
<div class="ab" style="left:1255px;top:0;width:4px;height:17px;background:#363636"></div>
<div class="ab" style="left:1259px;top:0;width:58px;height:18px;background:#424242"></div>
<div class="ab" style="left:1259px;top:0;width:58px;height:2px;background:#3a3a3a"></div>
<svg style="left:1297px;top:7px" width="11" height="6" viewBox="0 0 11 6"><path d="M4 0.3 L1 3 L4 5.7 M9.6 0.3 L6.6 3 L9.6 5.7" stroke="#e2e2e2" stroke-width="1.3" fill="none"/></svg>
<svg style="left:1274px;top:24px" width="29" height="6" viewBox="0 0 29 6" shape-rendering="crispEdges"><rect x="0" y="0" width="1" height="6" fill="#3c3c3c"/><rect x="3" y="0" width="1" height="6" fill="#3c3c3c"/><rect x="6" y="0" width="1" height="6" fill="#3c3c3c"/><rect x="9" y="0" width="1" height="6" fill="#3c3c3c"/><rect x="12" y="0" width="1" height="6" fill="#3c3c3c"/><rect x="15" y="0" width="1" height="6" fill="#3c3c3c"/><rect x="18" y="0" width="1" height="6" fill="#3c3c3c"/><rect x="21" y="0" width="1" height="6" fill="#3c3c3c"/><rect x="24" y="0" width="1" height="6" fill="#3c3c3c"/><rect x="27" y="0" width="1" height="6" fill="#3c3c3c"/></svg>
<div class="ab" style="left:1267.5px;top:37px;width:41px;height:34px;border-radius:3.5px;background:#363636"></div>
<svg style="left:1277px;top:41px" width="27" height="29" viewBox="0 0 27 29"><rect x="12.3" y="0" width="2.4" height="28.8" fill="#cdcdcd"/><path d="M0.4 10.6 L7 4.2 H13.2 V24.6 H0.4 Z" fill="#cdcdcd"/><path d="M13.8 4.2 H20 L26.6 10.6 V24.6 H13.8 Z" fill="#cdcdcd"/><path d="M0.4 10.4 H6.8 V4.2" fill="none" stroke="#363636" stroke-width="0.9"/><path d="M26.6 10.4 H20.2 V4.2" fill="none" stroke="#363636" stroke-width="0.9"/><rect x="13.1" y="4.2" width="0.9" height="20.4" fill="#363636"/></svg>
<svg style="left:1277px;top:84px" width="27" height="27" viewBox="0 0 27 27"><path d="M13.5 0.4 L26.3 9.1 L13.5 17.8 L0.7 9.1 Z" fill="#cdcdcd"/><path d="M3.8 14.9 L13.5 21.4 L23.2 14.9 L26.3 17.2 L13.5 26.3 L0.7 17.2 Z" fill="#cdcdcd"/></svg>
<div class="ab" style="left:1279.6px;top:128.5px;font-size:27px;line-height:27px;font-style:italic;color:#cdcdcd;white-space:pre;transform-origin:0 22.5px;transform:scale(1.22,1.15)">f</div>
<div class="ab" style="left:1289.6px;top:129.8px;font-size:21.5px;line-height:21.5px;font-style:italic;color:#cdcdcd;white-space:pre;transform-origin:0 17.75px;transform:scaleX(1.14)">x</div>
<svg style="left:1277px;top:171px" width="27" height="22" viewBox="0 0 27 22"><rect x="0.2" y="0.8" width="26.5" height="1.6" fill="#cdcdcd"/><rect x="0.2" y="5.1" width="6.6" height="1.6" fill="#cdcdcd"/><rect x="20" y="5.1" width="6.7" height="1.6" fill="#cdcdcd"/><rect x="0.2" y="9.4" width="6.1" height="1.6" fill="#cdcdcd"/><rect x="20.5" y="9.4" width="6.2" height="1.6" fill="#cdcdcd"/><rect x="0.2" y="14" width="6.6" height="1.6" fill="#cdcdcd"/><rect x="20" y="14" width="6.7" height="1.6" fill="#cdcdcd"/><rect x="0.2" y="18.9" width="26.5" height="1.6" fill="#cdcdcd"/><ellipse cx="13.5" cy="10.2" rx="6" ry="7" fill="#cdcdcd"/></svg>
<svg style="left:1275px;top:215px" width="31" height="16" viewBox="0 0 31 16"><g fill="none" stroke="#cdcdcd" stroke-width="2.9"><rect x="13.4" y="2.7" width="15.2" height="10.4" rx="5.2"/><path d="M13.75 2.88 A5.2 5.2 0 0 1 16.81 5.14" stroke="#535353" stroke-width="5"/><rect x="2.4" y="2.7" width="15.2" height="10.4" rx="5.2"/><path d="M16.99 12.85 A5.2 5.2 0 0 1 14.19 10.66" stroke="#535353" stroke-width="5"/><path d="M17.9 13.05 A5.2 5.2 0 0 1 13.85 10.02"/></g></svg>
<svg style="left:1276px;top:251px" width="30" height="29" viewBox="0 0 30 29"><circle cx="11.3" cy="11.7" r="10.5" fill="#cdcdcd"/><path d="M4.8 3.2 L7.3 2.2 L8.1 5.4 L10.9 5 L11.7 8.3 L10.1 9.5 L7.3 8.3 L5.2 10.3 L4 7 Z" fill="#535353"/><path d="M5.5 10.3 L8.5 13 L12 14.4 L17.4 15 V19.2 H13.6 L12.3 23 L10.7 22.6 L10.9 17.5 L9 14.6 L5 11.6 Z" fill="#535353"/><path d="M17.7 12 a1.4 1.4 0 0 1 2.8 0 V17.6 l0.6 -1 a1.35 1.35 0 0 1 2.3 0.6 l0.5 -0.4 a1.3 1.3 0 0 1 2.2 0.9 l0.4 -0.2 a1.25 1.25 0 0 1 1.9 1.1 V23 q0 3.2 -2.2 5.3 H20.6 Q17.2 26.3 14.3 21.6 a1.5 1.5 0 0 1 2.5 -1.4 l0.9 1 Z" fill="#cdcdcd" stroke="#535353" stroke-width="1.4"/></svg>
<svg style="left:1278px;top:295px" width="26" height="25" viewBox="0 0 26 25"><rect x="1.7" y="1.4" width="19.5" height="18.6" rx="1.6" fill="none" stroke="#bfbfbf" stroke-width="1.5"/><rect x="5" y="4.7" width="19.3" height="18.4" rx="1.6" fill="#535353" stroke="#bfbfbf" stroke-width="1.5"/><path d="M14 4.7 H19.7 V15.6 L16.85 13 L14 15.6 Z" fill="#bdbdbd"/></svg>
<div class="ab" style="left:1259px;top:332px;width:58px;height:1px;background:#3b3b3b"></div>
<svg style="left:1274px;top:338px" width="29" height="6" viewBox="0 0 29 6" shape-rendering="crispEdges"><rect x="0" y="0" width="1" height="6" fill="#3c3c3c"/><rect x="3" y="0" width="1" height="6" fill="#3c3c3c"/><rect x="6" y="0" width="1" height="6" fill="#3c3c3c"/><rect x="9" y="0" width="1" height="6" fill="#3c3c3c"/><rect x="12" y="0" width="1" height="6" fill="#3c3c3c"/><rect x="15" y="0" width="1" height="6" fill="#3c3c3c"/><rect x="18" y="0" width="1" height="6" fill="#3c3c3c"/><rect x="21" y="0" width="1" height="6" fill="#3c3c3c"/><rect x="24" y="0" width="1" height="6" fill="#3c3c3c"/><rect x="27" y="0" width="1" height="6" fill="#3c3c3c"/></svg>
<svg style="left:1277px;top:357px" width="28" height="25" viewBox="0 0 28 25"><rect x="5.9" y="1.2" width="20.1" height="19.3" fill="#494949" stroke="#c6c6c6" stroke-width="1.7"/><g fill="#c6c6c6"><rect x="15.3" y="1.2" width="1.4" height="2.6"/><rect x="23.4" y="10.1" width="2.6" height="1.4"/><rect x="15.3" y="17.9" width="1.4" height="2.6"/><rect x="6.7" y="2" width="2" height="2"/><rect x="23.2" y="2" width="2" height="2"/><rect x="23.2" y="17.7" width="2" height="2"/></g><rect x="4" y="14.3" width="10.1" height="9.9" fill="#c6c6c6"/><rect x="1.2" y="11.8" width="7.4" height="7.4" fill="#555" stroke="#c6c6c6" stroke-width="1.6"/></svg>
<div class="ab" style="left:1259px;top:393px;width:58px;height:1px;background:#3b3b3b"></div>
<!-- pages panel -->
<div class="ab" style="left:1076px;top:16px;width:183.6px;height:824px;background:#303030"></div>
<div class="ab" style="left:1076px;top:16px;width:183.6px;height:5px;background:#383838"></div>
<div class="ab" style="left:1078px;top:22px;width:180px;height:41px;background:#464646"></div>
<div class="ab" style="left:1078px;top:22px;width:70px;height:41px;background:#535353"></div>
<div class="ab" style="left:1148px;top:22px;width:6px;height:41px;background:#4b4b4b"></div>
<div class="ab" style="left:1154px;top:22px;width:6px;height:41px;background:#494949"></div>
<div class="ab" style="left:1078px;top:63px;width:180px;height:765px;background:#535353"></div>
<svg style="left:1089.7px;top:37.6px" width="8" height="14" viewBox="0 0 8 14"><path d="M1 6.3 L4 2.1 L7 6.3 M1 8 L4 12.2 L7 8" stroke="#a2a2a2" stroke-width="2.1" fill="none" stroke-linejoin="miter"/></svg>
<div class="ln ui" style="left:1105.00px;top:36.00px;font-size:15px;line-height:15px;font-weight:bold;color:#f2f2f2;transform:scaleX(1.0691);"><span>P...</span></div>
<svg style="left:1196px;top:38px" width="16" height="11" viewBox="0 0 16 11"><path d="M1 1 L6 5.5 L1 10 M9 1 L14 5.5 L9 10" stroke="#e2e2e2" stroke-width="1.6" fill="none"/></svg>
<div class="ab" style="left:1222px;top:35px;width:1px;height:16px;background:#8a8a8a"></div>
<svg style="left:1233px;top:37px" width="16" height="12" viewBox="0 0 16 12" shape-rendering="crispEdges"><path d="M0 1 H16 M0 4.2 H16 M0 7.4 H16 M0 10.6 H16" stroke="#bdbdbd" stroke-width="1.2"/></svg>
<div class="ln ui" style="left:1082.60px;top:76.15px;font-size:16.5px;line-height:16.5px;transform:scaleX(0.9645);"><span>[None]</span></div>
<div class="ab" style="left:1178px;top:69px;width:48px;height:36px;background:#fff"></div>
<div class="ln ui" style="left:1082.60px;top:119.05px;font-size:16.5px;line-height:16.5px;transform:scaleX(0.8904);"><span>A-Master</span></div>
<div class="ab" style="left:1178px;top:112px;width:48px;height:37px;background:#000"></div>
<div class="ab" style="left:1178px;top:112px;width:48px;height:37px;background:repeating-linear-gradient(to right,#8494b6 0,#8494b6 1px,transparent 1px,transparent 3px) 0 0/100% 1px no-repeat,repeating-linear-gradient(to right,#8494b6 0,#8494b6 1px,transparent 1px,transparent 3px) 0 100%/100% 1px no-repeat,repeating-linear-gradient(to bottom,#8494b6 0,#8494b6 1px,transparent 1px,transparent 3px) 0 0/1px 100% no-repeat,repeating-linear-gradient(to bottom,#8494b6 0,#8494b6 1px,transparent 1px,transparent 3px) 100% 0/1px 100% no-repeat"></div>
<div class="ab" style="left:1078px;top:245px;width:180px;height:2px;background:#5c5c5c"></div>
<svg style="left:1083px;top:264px" width="9" height="15" viewBox="0 0 9 15" shape-rendering="crispEdges"><rect x="0" y="1" width="9" height="2" fill="#9c9c9c"/><rect x="0" y="4" width="9" height="2" fill="#9c9c9c"/><rect x="0" y="7" width="9" height="2" fill="#9c9c9c"/><rect x="0" y="10" width="9" height="2" fill="#9c9c9c"/><rect x="0" y="13" width="9" height="2" fill="#9c9c9c"/></svg>
<div class="ln ui" style="left:1100.00px;top:265.05px;font-size:16.5px;line-height:16.5px;font-weight:bold;color:#f2f2f2;transform:scaleX(1.0211);"><span>800 x 600 H</span></div>
<svg style="left:1200px;top:270px" width="10" height="5" viewBox="0 0 10 5"><path d="M0 0 H10 L5 5 Z" fill="#c4c4c4"/></svg>
<div class="ab" style="left:1218px;top:253px;width:1px;height:38px;background:#6b6b6b"></div>
<div class="ab" style="left:1239px;top:296px;width:19px;height:493px;background:#4b4b4b"></div>
<svg style="left:1243px;top:303px" width="12" height="7" viewBox="0 0 12 7"><path d="M0.8 6 L6 0.9 L11.2 6" stroke="#777" stroke-width="1.1" fill="none"/></svg>
<svg style="left:1243px;top:777px" width="12" height="7" viewBox="0 0 12 7"><path d="M0.8 1 L6 6.1 L11.2 1" stroke="#777" stroke-width="1.1" fill="none"/></svg>
<div class="ab" style="left:1240px;top:453px;width:16px;height:77px;border-radius:8px;background:#6b6b6b"></div>
<svg style="left:1139.7px;top:296.8px" width="15" height="8" viewBox="0 0 15 8"><path d="M0 0 H15 L7.5 7.5 Z" fill="#c9c9c9"/></svg>
<svg style="left:1111px;top:305px" width="73" height="55" viewBox="0 0 73 55" shape-rendering="crispEdges"><rect x="0.5" y="0.5" width="72" height="54" fill="#000" stroke="#878787" stroke-width="1"/><rect x="2.0" y="4.0" width="53.6" height="1.3" fill="#f2f2f2"/><rect x="4.2" y="6.3" width="63.6" height="1.3" fill="#f2f2f2"/><rect x="4.0" y="8.6" width="6.5" height="1.3" fill="#f2f2f2"/><rect x="45.0" y="8.6" width="18.0" height="1.3" fill="#f2f2f2"/><rect x="2.3" y="11.2" width="2.7" height="1.3" fill="#f2f2f2"/><rect x="45.0" y="11.2" width="21.7" height="1.3" fill="#f2f2f2"/><rect x="45.0" y="12.8" width="3.0" height="1.3" fill="#f2f2f2"/><rect x="2.7" y="14.5" width="27.3" height="1.3" fill="#f2f2f2"/><rect x="3.0" y="17.0" width="20.0" height="1.3" fill="#f2f2f2"/><rect x="3.0" y="19.0" width="23.7" height="1.3" fill="#f2f2f2"/><rect x="2.7" y="22.7" width="29.3" height="1.3" fill="#f2f2f2"/><rect x="3.4" y="24.9" width="7.1" height="1.3" fill="#f2f2f2"/><rect x="2.7" y="27.3" width="30.3" height="1.3" fill="#f2f2f2"/><rect x="3.8" y="29.2" width="20.7" height="1.3" fill="#f2f2f2"/><rect x="2.7" y="31.0" width="20.7" height="1.3" fill="#f2f2f2"/><rect x="3.0" y="32.7" width="13.8" height="1.3" fill="#f2f2f2"/><rect x="2.7" y="35.5" width="18.9" height="1.3" fill="#f2f2f2"/><rect x="3.8" y="37.2" width="22.2" height="1.3" fill="#f2f2f2"/><rect x="3.8" y="39.6" width="18.2" height="1.3" fill="#f2f2f2"/><rect x="3.0" y="41.4" width="2.0" height="1.3" fill="#f2f2f2"/><rect x="2.7" y="45.1" width="14.1" height="1.3" fill="#f2f2f2"/><rect x="3.8" y="46.6" width="30.0" height="1.3" fill="#f2f2f2"/><rect x="3.8" y="48.3" width="17.0" height="1.3" fill="#f2f2f2"/><rect x="3.4" y="49.8" width="26.3" height="1.3" fill="#f2f2f2"/><rect x="3.8" y="51.3" width="7.8" height="1.3" fill="#f2f2f2"/><rect x="38.6" y="17" width="1.4" height="34.5" fill="#777"/><rect x="38.6" y="18.0" width="1.4" height="1" fill="#bdbdbd"/><rect x="38.6" y="20.9" width="1.4" height="1" fill="#bdbdbd"/><rect x="38.6" y="23.8" width="1.4" height="1" fill="#bdbdbd"/><rect x="38.6" y="26.7" width="1.4" height="1" fill="#bdbdbd"/><rect x="38.6" y="29.6" width="1.4" height="1" fill="#bdbdbd"/><rect x="38.6" y="32.5" width="1.4" height="1" fill="#bdbdbd"/><rect x="38.6" y="35.4" width="1.4" height="1" fill="#bdbdbd"/><rect x="38.6" y="38.3" width="1.4" height="1" fill="#bdbdbd"/><rect x="38.6" y="41.2" width="1.4" height="1" fill="#bdbdbd"/><rect x="38.6" y="44.1" width="1.4" height="1" fill="#bdbdbd"/><rect x="38.6" y="47.0" width="1.4" height="1" fill="#bdbdbd"/><rect x="38.6" y="49.9" width="1.4" height="1" fill="#bdbdbd"/></svg>
<div class="ab" style="left:1141px;top:306.6px;width:15px;height:15px;background:#fff"></div>
<div class="ab" style="left:1141px;top:306.6px;width:15px;height:15px;line-height:16px;text-align:center;font-size:14px;color:#000;">A</div>
<div class="ln ui" style="left:1112.40px;top:370.65px;font-size:16.5px;line-height:16.5px;transform:scaleX(0.8381);"><span>English:1</span></div>
<svg style="left:1139.7px;top:392.6px" width="15" height="8" viewBox="0 0 15 8"><path d="M0 0 H15 L7.5 7.5 Z" fill="#c9c9c9"/></svg>
<svg style="left:1111px;top:401px" width="73" height="55" viewBox="0 0 73 55" shape-rendering="crispEdges"><rect x="0.5" y="0.5" width="72" height="54" fill="#1b4879" stroke="#878787" stroke-width="1"/><rect x="3" y="3" width="26" height="2" fill="#6da2e2"/></svg>
<div class="ab" style="left:1140px;top:402.6px;width:17px;height:15px;background:#fff"></div>
<div class="ab" style="left:1140px;top:402.6px;width:17px;height:15px;line-height:16px;text-align:center;font-size:14px;color:#000;font-weight:bold;">A</div>
<div class="ab" style="left:1105px;top:463px;width:80px;height:21px;background:#2f8be9;overflow:hidden"><div class="ln ui" style="left:5.60px;top:3.65px;font-size:16.5px;line-height:16.5px;font-weight:bold;color:#fff;transform:scaleX(0.9213);"><span>Rogers:1</span></div>
</div>
<svg style="left:1111px;top:497px" width="73" height="55" viewBox="0 0 73 55" shape-rendering="crispEdges"><rect x="0.5" y="0.5" width="72" height="54" fill="#000" stroke="#878787" stroke-width="1"/><rect x="2.0" y="3.6" width="28.0" height="1.3" fill="#f2f2f2"/><rect x="4.0" y="5.6" width="19.0" height="1.3" fill="#f2f2f2"/><rect x="2.0" y="9.3" width="3.5" height="1.3" fill="#f2f2f2"/><rect x="2.5" y="11.5" width="15.5" height="1.3" fill="#f2f2f2"/><rect x="11.0" y="14.2" width="19.0" height="1.5" fill="#b8a800"/><rect x="2.5" y="16.8" width="6.5" height="1.0" fill="#1a6f6c"/><rect x="2.5" y="20.8" width="10.5" height="1.0" fill="#1a6f6c"/><rect x="2.5" y="29.8" width="10.5" height="1.0" fill="#1a6f6c"/><rect x="2.5" y="38.0" width="17.5" height="1.0" fill="#1a6f6c"/><rect x="2.5" y="44.0" width="23.5" height="1.0" fill="#1a6f6c"/><rect x="3.5" y="18.8" width="21.5" height="1.0" fill="#6e6e6e"/><rect x="3.5" y="31.8" width="17.5" height="1.0" fill="#6e6e6e"/><rect x="3.5" y="33.8" width="22.5" height="1.0" fill="#6e6e6e"/><rect x="3.5" y="39.8" width="16.5" height="1.0" fill="#6e6e6e"/><rect x="3.5" y="41.8" width="19.5" height="1.0" fill="#6e6e6e"/><rect x="3.5" y="45.8" width="16.5" height="1.0" fill="#6e6e6e"/><rect x="3.5" y="47.8" width="23.5" height="1.0" fill="#6e6e6e"/><rect x="3.5" y="49.8" width="24.5" height="1.0" fill="#6e6e6e"/><rect x="45.0" y="3.6" width="25.0" height="1.6" fill="#19e0e6"/><rect x="45.0" y="7.6" width="25.0" height="1.6" fill="#19e0e6"/><rect x="45.0" y="9.2" width="18.0" height="1.6" fill="#19e0e6"/><rect x="45.0" y="5.3" width="7.0" height="1.0" fill="#19e0e6"/><rect x="38.0" y="15.6" width="13.0" height="1.7" fill="#f2f2f2"/><rect x="38.0" y="16.9" width="8.0" height="1.7" fill="#f2f2f2"/><rect x="38.0" y="20.9" width="5.0" height="1.7" fill="#f2f2f2"/><rect x="38.0" y="22.4" width="14.0" height="1.7" fill="#f2f2f2"/><rect x="38.0" y="23.9" width="8.0" height="1.7" fill="#f2f2f2"/><rect x="38.0" y="28.9" width="31.0" height="1.7" fill="#f2f2f2"/><rect x="38.0" y="30.4" width="21.5" height="1.7" fill="#f2f2f2"/><rect x="38.0" y="34.2" width="22.0" height="1.7" fill="#f2f2f2"/><rect x="38.0" y="35.7" width="22.0" height="1.7" fill="#f2f2f2"/><rect x="38.0" y="37.2" width="15.0" height="1.7" fill="#f2f2f2"/><rect x="38.0" y="40.8" width="12.5" height="1.7" fill="#f2f2f2"/><rect x="38.0" y="42.5" width="23.0" height="1.7" fill="#f2f2f2"/><rect x="38.0" y="46.0" width="26.0" height="1.7" fill="#f2f2f2"/><rect x="38.0" y="47.6" width="1.5" height="1.7" fill="#f2f2f2"/></svg>
<div class="ab" style="left:1141px;top:498.6px;width:15px;height:15px;background:#fff"></div>
<div class="ab" style="left:1141px;top:498.6px;width:15px;height:15px;line-height:16px;text-align:center;font-size:14px;color:#000;">A</div>
<div class="ln ui" style="left:1114.60px;top:562.85px;font-size:16.5px;line-height:16.5px;transform:scaleX(0.8663);"><span>Rogers:2</span></div>
<svg style="left:1111px;top:593px" width="73" height="55" viewBox="0 0 73 55" shape-rendering="crispEdges"><rect x="0.5" y="0.5" width="72" height="54" fill="#000" stroke="#878787" stroke-width="1"/><rect x="2" y="3" width="1.5" height="1.5" fill="#bbb"/><rect x="47.0" y="4.0" width="5.0" height="1.2" fill="#777a30"/><rect x="46.5" y="6.0" width="5.0" height="1.2" fill="#666"/><rect x="46.5" y="9.0" width="3.0" height="1.2" fill="#555"/><rect x="46.5" y="11.0" width="5.0" height="1.2" fill="#ccc"/><rect x="46.5" y="12.5" width="6.0" height="1.2" fill="#246b60"/><rect x="46.5" y="14.5" width="5.0" height="1.2" fill="#1d5c52"/><rect x="46.0" y="17.0" width="6.5" height="1.2" fill="#999"/><rect x="47.0" y="21.0" width="2.0" height="1.2" fill="#1d5c52"/><rect x="47.0" y="22.5" width="5.0" height="1.2" fill="#2c8c7c"/><rect x="47.0" y="24.5" width="2.5" height="1.2" fill="#ddd"/><rect x="47.0" y="27.0" width="2.0" height="1.2" fill="#1d5c52"/><rect x="47.0" y="31.0" width="3.0" height="1.2" fill="#333"/><rect x="54.0" y="21.0" width="3.0" height="1.2" fill="#1d4c62"/><rect x="54.0" y="23.0" width="5.0" height="1.2" fill="#2c8c7c"/><rect x="54.0" y="24.5" width="3.0" height="1.2" fill="#aaa"/><rect x="54.0" y="28.0" width="6.0" height="1.2" fill="#2c7c6c"/><rect x="54.0" y="29.5" width="6.0" height="1.2" fill="#2c7c6c"/><rect x="54.0" y="33.0" width="3.0" height="1.2" fill="#ddd"/><rect x="54.0" y="34.0" width="6.0" height="1.2" fill="#bbb"/><rect x="54.5" y="47.0" width="7.0" height="1.2" fill="#999"/><rect x="55.0" y="41.0" width="2.0" height="1.2" fill="#2c8c7c"/><rect x="62.0" y="38.0" width="4.0" height="1.2" fill="#444"/><rect x="62.0" y="41.0" width="5.0" height="1.2" fill="#2c9c8c"/><rect x="62.0" y="42.5" width="4.0" height="1.2" fill="#2c9c8c"/><rect x="62.0" y="45.0" width="7.0" height="1.2" fill="#666"/><rect x="62.0" y="46.3" width="7.0" height="1.2" fill="#555"/></svg>
<div class="ab" style="left:1141px;top:594.6px;width:15px;height:15px;background:#fff"></div>
<div class="ab" style="left:1141px;top:594.6px;width:15px;height:15px;line-height:16px;text-align:center;font-size:14px;color:#000;">A</div>
<div class="ln ui" style="left:1114.20px;top:658.65px;font-size:16.5px;line-height:16.5px;transform:scaleX(0.8782);"><span>Rogers:3</span></div>
<svg style="left:1111px;top:689px" width="73" height="55" viewBox="0 0 73 55" shape-rendering="crispEdges"><rect x="0.5" y="0.5" width="72" height="54" fill="#000" stroke="#878787" stroke-width="1"/><rect x="2.0" y="3.8" width="13.5" height="1.3" fill="#f2f2f2"/><rect x="2.5" y="5.8" width="27.5" height="1.3" fill="#f2f2f2"/><rect x="3.5" y="7.2" width="2.5" height="1.3" fill="#f2f2f2"/><rect x="3.0" y="12.8" width="3.5" height="1.3" fill="#f2f2f2"/><rect x="2.5" y="14.4" width="27.5" height="1.3" fill="#f2f2f2"/><rect x="3.5" y="16.0" width="8.0" height="1.3" fill="#f2f2f2"/><rect x="2.0" y="19.0" width="30.5" height="1.3" fill="#f2f2f2"/><rect x="2.5" y="20.6" width="17.5" height="1.3" fill="#f2f2f2"/><rect x="2.5" y="22.6" width="19.0" height="1.3" fill="#f2f2f2"/><rect x="2.0" y="27.6" width="32.0" height="1.3" fill="#f2f2f2"/><rect x="2.5" y="29.4" width="32.0" height="1.3" fill="#f2f2f2"/><rect x="3.5" y="30.8" width="3.5" height="1.3" fill="#f2f2f2"/><rect x="2.0" y="32.8" width="27.5" height="1.3" fill="#f2f2f2"/><rect x="3.0" y="34.2" width="27.0" height="1.3" fill="#f2f2f2"/><rect x="3.0" y="35.6" width="28.0" height="1.3" fill="#f2f2f2"/><rect x="4.0" y="37.2" width="4.5" height="1.3" fill="#f2f2f2"/><rect x="2.0" y="40.2" width="10.5" height="1.3" fill="#f2f2f2"/><rect x="2.5" y="41.8" width="10.0" height="1.3" fill="#f2f2f2"/><rect x="3.5" y="43.0" width="8.5" height="1.3" fill="#f2f2f2"/><rect x="2.0" y="45.8" width="25.5" height="1.3" fill="#f2f2f2"/><rect x="3.5" y="47.4" width="6.5" height="1.3" fill="#f2f2f2"/><rect x="3.5" y="48.8" width="16.5" height="1.3" fill="#f2f2f2"/><rect x="2.0" y="10.6" width="28.0" height="1.8" fill="#f2f2f2"/><rect x="8.0" y="10.6" width="10.0" height="1.8" fill="#35b8c8"/><rect x="13.0" y="24.6" width="11.0" height="2.4" fill="#e6e022"/><rect x="46.0" y="6.6" width="15.0" height="1.6" fill="#5f6a22"/><rect x="45.0" y="11.0" width="11.0" height="1.0" fill="#164f4c"/><rect x="46.0" y="13.0" width="7.0" height="1.0" fill="#1d6a66"/><rect x="45.0" y="15.0" width="14.0" height="1.0" fill="#1d6a66"/><rect x="38.0" y="17.0" width="28.0" height="1.0" fill="#164f4c"/><rect x="38.0" y="19.0" width="28.0" height="1.0" fill="#123c3a"/><rect x="38.0" y="22.0" width="25.0" height="1.0" fill="#164f4c"/><rect x="38.0" y="24.0" width="27.0" height="1.0" fill="#123c3a"/><rect x="38.0" y="27.0" width="25.0" height="1.0" fill="#164f4c"/><rect x="38.0" y="29.0" width="30.0" height="1.0" fill="#1f8079"/><rect x="38.0" y="32.6" width="12.5" height="1.3" fill="#f2f2f2"/><rect x="38.0" y="34.8" width="27.0" height="1.3" fill="#f2f2f2"/><rect x="38.5" y="36.4" width="12.0" height="1.3" fill="#f2f2f2"/><rect x="38.5" y="37.8" width="12.0" height="1.3" fill="#f2f2f2"/><rect x="39.0" y="39.4" width="18.0" height="1.3" fill="#f2f2f2"/><rect x="38.0" y="43.0" width="26.0" height="1.3" fill="#f2f2f2"/><rect x="38.0" y="44.6" width="17.0" height="1.3" fill="#f2f2f2"/><rect x="38.0" y="46.2" width="24.0" height="1.3" fill="#f2f2f2"/><rect x="38.0" y="47.8" width="16.0" height="1.3" fill="#f2f2f2"/><rect x="38.0" y="51.4" width="32.0" height="1.3" fill="#f2f2f2"/></svg>
<div class="ab" style="left:1141px;top:690.6px;width:15px;height:15px;background:#fff"></div>
<div class="ab" style="left:1141px;top:690.6px;width:15px;height:15px;line-height:16px;text-align:center;font-size:14px;color:#000;">A</div>
<div class="ab" style="left:1100px;top:750px;width:100px;height:20px;overflow:hidden"><div class="ln ui" style="left:14.20px;top:4.75px;font-size:16.5px;line-height:16.5px;transform:scaleX(0.8857);"><span>Rogers:4</span></div>
</div>
<div class="ab" style="left:1078px;top:789px;width:180px;height:39px;background:#525252"></div>
<div class="ab" style="left:1086.7px;top:813px;width:2.4px;height:2.6px;background:#ececec"></div>
<div class="ab" style="left:1091.7px;top:813px;width:2.4px;height:2.6px;background:#ececec"></div>
<div class="ab" style="left:1096.7px;top:813px;width:2.4px;height:2.6px;background:#ececec"></div>
<svg style="left:1115px;top:798px" width="30" height="19" viewBox="0 0 30 19"><g fill="none" stroke="#c2c2c2" stroke-width="1.5"><path d="M8 7 V1.5 H15.5 L20 6 V16.5 H16"/><path d="M15 1.8 V6.5 H19.8"/><rect x="1.5" y="7.5" width="14.5" height="9"/></g><path d="M23.5 14.5 H28 L25.75 17 Z" fill="#c2c2c2"/></svg>
<svg style="left:1164px;top:799px" width="18" height="18" viewBox="0 0 18 18"><g fill="none" stroke="#c2c2c2" stroke-width="1.5"><rect x="1.2" y="1.6" width="15.2" height="14.6"/><path d="M8.8 5.5 V12.5 M5.3 9 H12.3"/></g></svg>
<svg style="left:1204px;top:798px" width="19" height="20" viewBox="0 0 19 20"><g fill="none" stroke="#c2c2c2" stroke-width="1.5"><path d="M1.5 4.3 H17.5"/><path d="M6.3 4 V1.6 H12.7 V4"/><path d="M3.3 4.5 L4.2 17.8 H14.8 L15.7 4.5"/><path d="M7 7 V15.3 M9.5 7 V15.3 M12 7 V15.3"/></g></svg>
<div class="ab" style="left:1078px;top:829px;width:180px;height:10px;background:#4f4f4f"></div>
<svg style="left:1153px;top:831px" width="29" height="6" viewBox="0 0 29 6" shape-rendering="crispEdges"><rect x="0" y="0" width="1" height="6" fill="#3a3a3a"/><rect x="3" y="0" width="1" height="6" fill="#3a3a3a"/><rect x="6" y="0" width="1" height="6" fill="#3a3a3a"/><rect x="9" y="0" width="1" height="6" fill="#3a3a3a"/><rect x="12" y="0" width="1" height="6" fill="#3a3a3a"/><rect x="15" y="0" width="1" height="6" fill="#3a3a3a"/><rect x="18" y="0" width="1" height="6" fill="#3a3a3a"/><rect x="21" y="0" width="1" height="6" fill="#3a3a3a"/><rect x="24" y="0" width="1" height="6" fill="#3a3a3a"/><rect x="27" y="0" width="1" height="6" fill="#3a3a3a"/></svg>
</body></html>
